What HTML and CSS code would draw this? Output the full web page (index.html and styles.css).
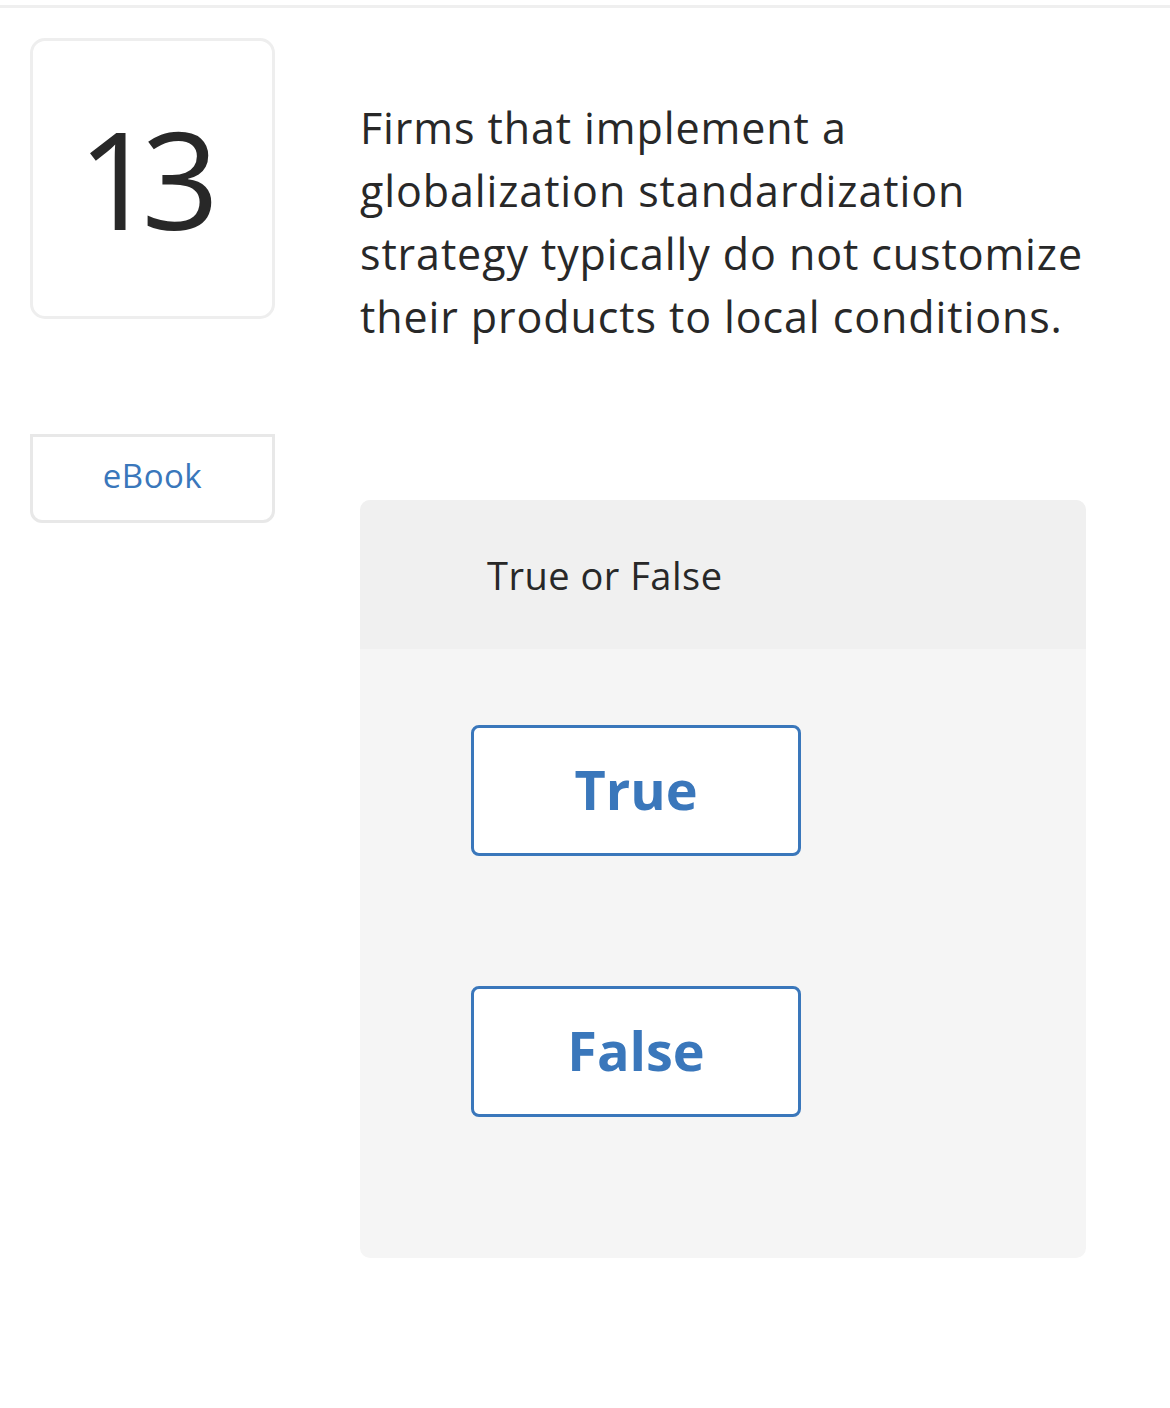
FILE: index.html
```html
<!DOCTYPE html>
<html lang="en">
<head>
    <meta charset="UTF-8">
    <meta name="viewport" content="width=device-width, initial-scale=1.0">
    <title>Question 13</title>
    <link rel="stylesheet" href="styles.css">
</head>
<body id="page">
    <div class="topline"></div>
    <div id="container">
        <div class="side">
            <div class="number-box">13</div>
            <div class="ebook-box">eBook</div>
        </div>
        <div class="question">
            <p class="prompt">Firms that implement a<br>globalization standardization<br>strategy typically do not customize<br>their products to local conditions.</p>
            <div class="panel">
                <div class="panel-head">True or False</div>
                <div class="panel-body">
                    <button class="answer">True</button>
                    <button class="answer">False</button>
                </div>
            </div>
        </div>
    </div>
</body>
</html>
```

FILE: styles.css
```css
#page {
    margin: 0;
    padding-top: 5px;
    width: 1170px;
    height: 1403px;
    background: #fff;
    font-family: "Open Sans", Lato, sans-serif;
    font-variant-ligatures: none;
    color: #282828;
}
.topline {
    height: 3px;
    background: #efefef;
}
#container {
    display: flex;
    padding-left: 30px;
    padding-top: 30px;
}
.side {
    width: 245px;
    display: flex;
    flex-direction: column;
}
.number-box {
    box-sizing: border-box;
    height: 281px;
    border: 3px solid #eeeeee;
    border-radius: 15px;
    display: flex;
    align-items: center;
    justify-content: center;
    font-size: 136px;
    letter-spacing: -14px;
    line-height: 1;
    padding-bottom: 2px;
    padding-right: 22px;
}
.ebook-box {
    box-sizing: border-box;
    margin-top: 115px;
    height: 89px;
    border: 3px solid #e8e8e8;
    border-radius: 0 0 12px 12px;
    display: flex;
    align-items: center;
    justify-content: center;
    font-size: 33px;
    letter-spacing: 0.5px;
    padding-bottom: 6px;
    color: #3a77bb;
}
.question {
    margin-left: 85px;
    width: 726px;
}
.prompt {
    margin: 58px 0 0 0;
    font-size: 43px;
    letter-spacing: 0.9px;
    line-height: 63px;
    white-space: nowrap;
}
.panel {
    margin-top: 152px;
    border-radius: 10px;
    overflow: hidden;
    background: #f5f5f5;
}
.panel-head {
    height: 149px;
    background: #f0f0f0;
    display: flex;
    align-items: center;
    padding-left: 127px;
    font-size: 38px;
    letter-spacing: 0.5px;
}
.panel-body {
    display: flex;
    flex-direction: column;
    gap: 130px;
    padding: 76px 0 141px 111px;
}
.answer {
    box-sizing: border-box;
    width: 330px;
    height: 131px;
    border: 3px solid #3a77bb;
    border-radius: 8px;
    background: #fff;
    font-family: "Open Sans", Lato, sans-serif;
    font-weight: bold;
    font-size: 54px;
    color: #3a77bb;
    padding: 0 0 4px 0;
}
```
